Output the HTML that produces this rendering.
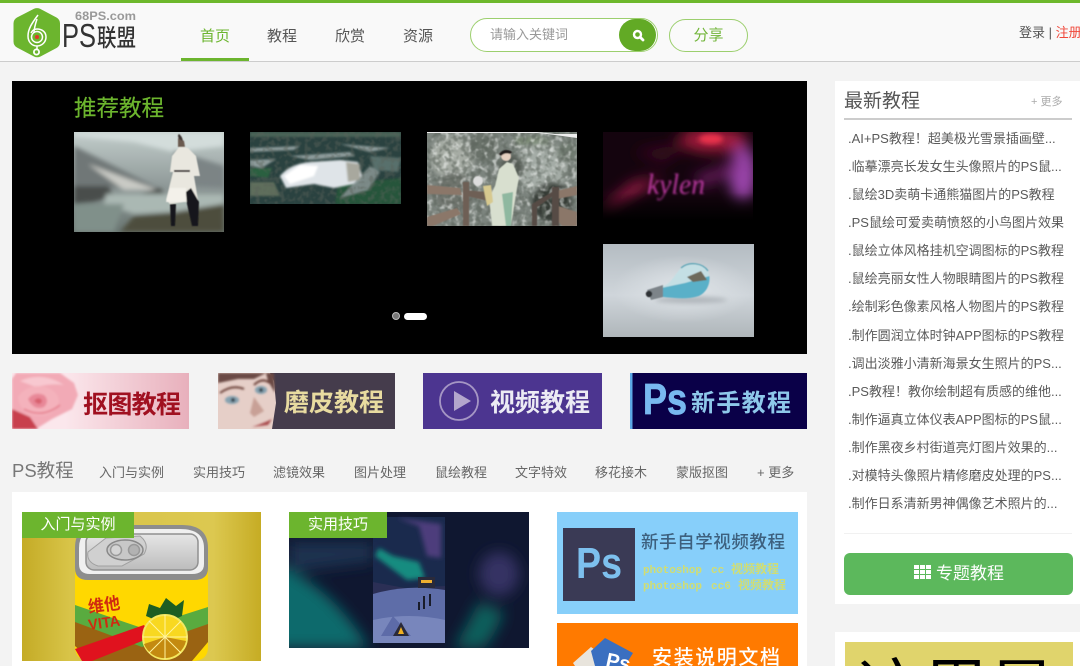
<!DOCTYPE html>
<html lang="zh"><head><meta charset="utf-8"><title>PS联盟</title>
<style>
html,body{margin:0;padding:0;width:1080px;height:666px;overflow:hidden}
body{background:#f3f3f3;font-family:"Liberation Sans","Noto Sans CJK SC",sans-serif;color:#555}
#w{position:relative;width:1080px;height:666px;overflow:hidden}
.a{position:absolute;white-space:nowrap}
svg{position:absolute;display:block;overflow:hidden}
.nav{top:26px;font-size:15px;line-height:22px;color:#555}
.tab{top:464px;font-size:13px;line-height:18px;color:#666}
.li{left:848px;font-size:13px;line-height:18px;color:#5a5a5a}
</style></head><body><div id="w">
<svg width="0" height="0" style="position:absolute"><defs>
<filter id="b1" x="-30%" y="-30%" width="160%" height="160%"><feGaussianBlur stdDeviation="1"/></filter>
<filter id="b2" x="-50%" y="-50%" width="200%" height="200%"><feGaussianBlur stdDeviation="2.500"/></filter>
<filter id="b3" x="-60%" y="-60%" width="220%" height="220%"><feGaussianBlur stdDeviation="7"/></filter>
<filter id="b4" x="-20%" y="-20%" width="140%" height="140%"><feGaussianBlur stdDeviation=".6"/></filter>
<filter id="nd" x="0" y="0" width="100%" height="100%"><feTurbulence type="fractalNoise" baseFrequency=".2" numOctaves="2" seed="4"/><feColorMatrix values="0 0 0 0 .1  0 0 0 0 .12  0 0 0 0 .1  0 0 0 5 -2.300"/><feGaussianBlur stdDeviation=".5"/></filter>
<filter id="nl" x="0" y="0" width="100%" height="100%"><feTurbulence type="fractalNoise" baseFrequency=".18" numOctaves="2" seed="9"/><feColorMatrix values="0 0 0 0 .88  0 0 0 0 .9  0 0 0 0 .88  0 0 0 5 -2.500"/><feGaussianBlur stdDeviation=".5"/></filter>
</defs></svg>

<!-- header -->
<div class="a" style="left:0;top:0;width:1080px;height:61px;background:#f9f9f9;border-bottom:1px solid #ccc"></div>
<div class="a" style="left:0;top:0;width:1080px;height:3px;background:#6db82c"></div>
<svg style="left:10px;top:5px" width="130" height="55" viewBox="0 0 130 55">
<path d="M24 3.800Q27 2.400 30 3.800L46.500 12.500Q50 14.500 50 18.500L50 37Q50 41 46.500 43L30.500 51.500Q27 53 24 51.500L7 42.500Q3.500 40.500 3.500 36.500L3.500 18.500Q3.500 14.500 7 12.500Z" fill="#6cb52e"/>
<g fill="none" stroke="#fff" stroke-width="1.500">
<path d="M28 10C22 18 18 24 18 31C18 37 22 41 27 41C32 41 36 37 36 32C36 27 32 24 27 24C24 24 22 26 21 28"/>
<path d="M27 14C25 20 24 24 24 28"/>
<circle cx="27" cy="32" r="5.500"/>
<circle cx="26.500" cy="47" r="2.600" stroke-width="1.800"/>
</g>
<path d="M27 41V44" stroke="#fff" stroke-width="1.500"/>
<circle cx="27" cy="32" r="2" fill="#e0392c"/>
<text x="65" y="15" font-family="Liberation Sans" font-size="11.500" font-weight="bold" fill="#999" textLength="61" lengthAdjust="spacingAndGlyphs">68PS.com</text>
<text x="52" y="42" font-family="Liberation Sans" font-size="33" fill="#333" textLength="34" lengthAdjust="spacingAndGlyphs">PS</text>
<text x="87" y="41" font-family="Noto Sans CJK SC" font-size="24" font-weight="500" fill="#333" textLength="39" lengthAdjust="spacingAndGlyphs">联盟</text>
</svg>
<div class="a nav" style="left:200px;color:#6cb52e">首页</div>
<div class="a nav" style="left:267px">教程</div>
<div class="a nav" style="left:335px">欣赏</div>
<div class="a nav" style="left:403px">资源</div>
<div class="a" style="left:181px;top:58px;width:68px;height:3px;background:#6cb52e"></div>
<div class="a" style="left:470px;top:18px;width:186px;height:32px;border:1.500px solid #9ccf6e;border-radius:17px;background:#fff"></div>
<div class="a" style="left:490px;top:26px;font-size:13px;line-height:18px;color:#999">请输入关键词</div>
<div class="a" style="left:619px;top:19px;width:37px;height:32px;border-radius:17px;background:#62aa25"></div>
<svg style="left:630px;top:27px" width="16" height="16" viewBox="0 0 16 16"><circle cx="7.500" cy="7.500" r="3.500" fill="none" stroke="#fff" stroke-width="2.400"/><path d="M10.500 10.500L13 13" stroke="#fff" stroke-width="2.800" stroke-linecap="round"/></svg>
<div class="a" style="left:669px;top:19px;width:77px;height:31px;border:1px solid #9ccf6e;border-radius:17px;background:#fafafa;text-align:center;font-size:15px;line-height:31px;color:#72b53a">分享</div>
<div class="a" style="left:1019px;top:24px;font-size:13px;line-height:18px;color:#555">登录 | <span style="color:#f0483a">注册</span></div>

<!-- slider -->
<div class="a" style="left:12px;top:81px;width:795px;height:273px;background:#000"></div>
<div class="a" style="left:74px;top:93px;font-size:22.500px;line-height:31px;color:#6cb52e;-webkit-text-stroke:.2px #6cb52e">推荐教程</div>

<svg style="left:74px;top:132px" width="150" height="100" viewBox="0 0 150 100">
<defs><linearGradient id="s1" x1="0" y1="0" x2="0" y2="1"><stop offset="0" stop-color="#c2cdcb"/><stop offset=".55" stop-color="#8e9897"/><stop offset="1" stop-color="#6a7672"/></linearGradient></defs>
<rect width="150" height="100" fill="url(#s1)"/>
<g filter="url(#b2)">
<path d="M0 0H150V14L100 20 60 10 0 4Z" fill="#d3dddb"/>
<path d="M0 14L88 58 0 54Z" fill="#6f7777"/>
<path d="M14 32L84 58 50 58Z" fill="#c9cac5"/>
<path d="M100 18L150 34V56L100 54Z" fill="#7c8485"/>
<path d="M0 54H34L40 64 20 70 0 72Z" fill="#4a4e4c"/>
<path d="M66 62L86 56 94 66 70 70Z" fill="#4c4f4c"/>
<path d="M32 62H150V78L60 82 30 72Z" fill="#aab8b3"/>
<path d="M0 72H50L40 100H0Z" fill="#80908a"/>
<path d="M46 100L60 84 100 80 150 72V100Z" fill="#4e4d3c"/>
</g>
<g filter="url(#b4)">
<path d="M106 14L114 16 122 24 126 44 120 44 124 68 96 72 92 68 99 40 96 40 98 24Z" fill="#e9e7df"/>
<path d="M100 38H116V40H100Z" fill="#3a3230"/>
<path d="M104 6L110 9 111 15 104 15Z" fill="#6a5a50"/>
<path d="M105 7Q103 3 105 2Q108 4 109 9Z" fill="#3c3433"/>
<path d="M112 60L117 56 125 70 124 94H118L113 72Z" fill="#17181a"/>
<path d="M96 72H102L101 94H97Z" fill="#17181a"/>
<path d="M96 56H112V70L92 70Z" fill="#f3f1ea"/>
</g></svg>

<svg style="left:250px;top:132px" width="151" height="72" viewBox="0 0 151 72">
<rect width="151" height="72" fill="#2a4240"/>
<g filter="url(#b1)">
<path d="M0 0H151V5H0Z" fill="#4a6356"/>
<path d="M0 16L50 14 44 18 0 20ZM40 24L100 20 105 24 60 28ZM0 28L26 27 12 36 0 34ZM90 12L140 16 120 20Z" fill="#8d9b9b"/>
<path d="M0 36H22L18 46 0 44Z" fill="#2b6040"/>
<path d="M88 52L151 46V72H85Z" fill="#28543a"/>
<path d="M0 50H24L30 64H0Z" fill="#5e6e5c"/>
<path d="M120 24L151 26 148 40 124 38Z" fill="#58706c"/>
<path d="M105 50L120 34 130 40 118 58 90 66Z" fill="#7c8a88"/>
</g>
<rect width="151" height="72" filter="url(#nd)" opacity=".45"/>
<g filter="url(#b1)">
<path d="M30 44Q40 32 60 30L90 28 108 30 112 44 104 52 84 56 64 52 36 56Z" fill="#dfe4e8"/>
<path d="M34 44L50 33 68 34 64 44 40 52Z" fill="#fff"/>
<path d="M96 30L110 32 110 48 98 50Z" fill="#a8a89e"/>
</g></svg>

<svg style="left:427px;top:132px" width="150" height="94" viewBox="0 0 150 94">
<rect width="150" height="94" fill="#7c847e"/>
<g filter="url(#b2)">
<circle cx="25" cy="25" r="22" fill="#a6aca4"/><circle cx="56" cy="14" r="16" fill="#6a726a"/><circle cx="115" cy="35" r="26" fill="#a4aca6"/><circle cx="85" cy="35" r="12" fill="#545b54"/><circle cx="140" cy="20" r="10" fill="#6f7a70"/><circle cx="28" cy="60" r="20" fill="#6f746e"/><circle cx="125" cy="70" r="20" fill="#343a36"/>
<path d="M88 5L112 4 128 12 88 13Z" fill="#7b8a76"/>
</g>
<rect width="150" height="94" filter="url(#nl)" opacity=".55"/>
<rect width="150" height="94" filter="url(#nd)" opacity=".55"/>
<path d="M0 0H110L128 2 150 2V6L128 3 112 1H0Z" fill="#eee"/>
<g filter="url(#b4)">
<path d="M0 53L33 56 35 63 0 62ZM0 85L30 76 34 82 6 94H0ZM125 60L150 54V63L125 68ZM125 72L150 80V94H135L125 82Z" fill="#8b7769"/>
<path d="M36 50H42V94H36ZM60 60L65 70 40 64 36 58Z" fill="#6e5f55"/>
<path d="M105 72L125 60 126 64 106 78ZM105 72H110V94H105ZM125 55H132V94H125Z" fill="#574b45"/>
<path d="M80 30L72 37 68 54 62 66 65 94H84L90 56 92 46 86 32Z" fill="#d8dfcf"/>
<path d="M75 62L79 94H84L86 60Z" fill="#8fb8a0"/>
<path d="M56 54L64 53 66 70 60 74Z" fill="#d7c98f"/>
<circle cx="79" cy="24" r="5" fill="#e6cfc0"/>
<path d="M72 22Q78 15 85 20L83 22Q78 20 74 24Z" fill="#211a1c"/>
<circle cx="51" cy="49" r="5" fill="#ddd"/>
</g></svg>

<svg style="left:603px;top:132px" width="150" height="93" viewBox="0 0 150 93">
<defs><linearGradient id="s4" x1="0" y1="0" x2="0" y2="1"><stop offset=".65" stop-color="#000" stop-opacity="0"/><stop offset=".95" stop-color="#000"/></linearGradient></defs>
<rect width="150" height="93" fill="#14040e"/>
<g filter="url(#b3)">
<ellipse cx="110" cy="8" rx="34" ry="12" fill="#a81c3c"/>
<ellipse cx="140" cy="42" rx="14" ry="28" fill="#9a44aa"/>
<path d="M4 72L30 50 60 45 0 84Z" fill="#a01a4a"/>
<path d="M90 45L140 28 130 40 100 55Z" fill="#6f1c64"/>
<path d="M30 20L90 10 60 30Z" fill="#3c0a22"/>
</g>
<ellipse cx="108" cy="7" rx="12" ry="5" fill="#e8304c" filter="url(#b2)"/>
<text x="44" y="62" font-family="Liberation Serif" font-style="italic" font-size="30" fill="#b8389e" textLength="58" lengthAdjust="spacingAndGlyphs" filter="url(#b1)">kylen</text>
<rect width="150" height="93" fill="url(#s4)"/></svg>

<svg style="left:603px;top:244px" width="151" height="93" viewBox="0 0 151 93">
<defs><linearGradient id="s5" x1="0" y1="0" x2="0" y2="1"><stop offset="0" stop-color="#b4bcc2"/><stop offset=".55" stop-color="#cfd5da"/><stop offset="1" stop-color="#afb6ba"/></linearGradient>
<radialGradient id="s5b" cx=".5" cy=".5" r=".5"><stop offset="0" stop-color="#dfe4e8"/><stop offset="1" stop-color="#dfe4e8" stop-opacity="0"/></radialGradient>
<clipPath id="bulb"><path d="M60 42C68 40 72 30 78 24C86 17 100 19 105 27C109 36 105 48 96 52C84 56 72 54 60 53Z"/></clipPath></defs>
<rect width="151" height="93" fill="url(#s5)"/>
<ellipse cx="80" cy="45" rx="70" ry="34" fill="url(#s5b)"/>
<g filter="url(#b4)">
<ellipse cx="88" cy="56" rx="36" ry="3.500" fill="#b0b6bb" filter="url(#b2)"/>
<path d="M44 46L60 41 60 53 48 56Z" fill="#7d8489"/>
<circle cx="46" cy="50" r="3.200" fill="#2e3236"/>
<path d="M60 42C68 40 72 30 78 24C86 17 100 19 105 27C109 36 105 48 96 52C84 56 72 54 60 53Z" fill="#c4dfe4"/>
<g clip-path="url(#bulb)"><path d="M58 44L82 39 110 31V58H58Z" fill="#5ab0c8"/><path d="M84 33L98 27 104 36 90 38Z" fill="#6e6a5c"/></g>
<path d="M78 24C86 17 100 19 105 27" fill="none" stroke="#5aa4b6" stroke-width="1.300"/>
</g></svg>

<div class="a" style="left:392px;top:312px;width:6px;height:6px;border-radius:50%;background:#777;border:1px solid #bbb"></div>
<div class="a" style="left:404px;top:313px;width:23px;height:7px;border-radius:4px;background:#fff"></div>

<!-- banners -->
<svg style="left:12px;top:373px" width="177" height="56" viewBox="0 0 177 56">
<defs><linearGradient id="b_1" x1="0" x2="1"><stop offset=".3" stop-color="#fbe7ec"/><stop offset="1" stop-color="#e8b0bc"/></linearGradient></defs>
<rect width="177" height="56" fill="url(#b_1)"/>
<g filter="url(#b1)">
<path d="M4 0H48L62 10 66 22 60 36 40 46 24 56H0V6Z" fill="#f2aab6"/>
<path d="M0 36L18 44 26 56H0Z" fill="#c8404e"/>
<path d="M8 8Q30 -2 52 12 40 10 24 14Z" fill="#f8c8d0"/>
<path d="M6 24Q16 10 34 14 50 20 46 34 36 46 20 42 8 38 6 24Z" fill="#f4b2bc"/>
<path d="M16 26Q22 18 32 22 38 28 32 34 22 38 16 26Z" fill="#e88898"/>
<path d="M22 28Q26 23 30 27 30 31 26 31Z" fill="#d8606e"/>
<path d="M12 36Q30 46 48 32" stroke="#e47a8a" stroke-width="1.500" fill="none"/>
</g>
<text x="71" y="40" font-family="Noto Sans CJK SC" font-size="25" font-weight="bold" fill="#a01020" textLength="98">抠图教程</text></svg>

<svg style="left:218px;top:373px" width="177" height="56" viewBox="0 0 177 56">
<rect width="177" height="56" fill="#453c4c"/>
<path d="M0 0H52L56 8 58 30 54 56H0Z" fill="#e6cfc8"/>
<g filter="url(#b1)">
<path d="M0 0H48L36 6 20 6 0 10ZM48 0L56 0 57 20 50 8Z" fill="#6a4a44"/>
<path d="M2 20Q14 11 26 16" stroke="#6a4038" stroke-width="2" fill="none"/>
<path d="M36 12Q44 4 52 10" stroke="#6a4038" stroke-width="2" fill="none"/>
<ellipse cx="14" cy="27" rx="7" ry="4" fill="#86a2b0"/><circle cx="15" cy="27" r="2" fill="#2e3a44"/>
<ellipse cx="43" cy="17" rx="6" ry="4" fill="#86a2b0"/><circle cx="43" cy="17" r="2" fill="#2e3a44"/>
<path d="M36 24L46 38 36 44 32 40Z" fill="#c8a096"/>
<path d="M34 54Q46 50 54 46L50 52Z" fill="#a84a4c"/>
</g>
<text x="66" y="38" font-family="Noto Sans CJK SC" font-size="25" font-weight="bold" fill="#e8dba0" textLength="100">磨皮教程</text></svg>

<svg style="left:423px;top:373px" width="179" height="56" viewBox="0 0 179 56">
<rect width="179" height="56" fill="#4c3590"/>
<circle cx="36" cy="28" r="19" fill="none" stroke="#a596c4" stroke-width="1.800"/>
<path d="M31 18L48 28 31 38Z" fill="#b3a6cc"/>
<text x="67" y="38" font-family="Noto Sans CJK SC" font-size="25" font-weight="bold" fill="#ecebf4" textLength="100">视频教程</text></svg>

<svg style="left:630px;top:373px" width="177" height="56" viewBox="0 0 177 56">
<rect width="177" height="56" fill="#0a0048"/>
<rect width="2.500" height="56" fill="#5ca8e6"/>
<text x="13" y="41" font-family="Liberation Sans" font-size="44" font-weight="bold" fill="#78b8f0" stroke="#78b8f0" stroke-width=".8" textLength="44" lengthAdjust="spacingAndGlyphs">Ps</text>
<text x="61" y="38" font-family="Noto Sans CJK SC" font-size="24" font-weight="bold" fill="#8ec8ea" textLength="100">新手教程</text></svg>

<!-- tabs -->
<div class="a" style="left:12px;top:458px;font-size:18.500px;line-height:26px;color:#777">PS教程</div>
<div class="a tab" style="left:99px">入门与实例</div>
<div class="a tab" style="left:193px">实用技巧</div>
<div class="a tab" style="left:273px">滤镜效果</div>
<div class="a tab" style="left:354px">图片处理</div>
<div class="a tab" style="left:435px">鼠绘教程</div>
<div class="a tab" style="left:515px">文字特效</div>
<div class="a tab" style="left:595px">移花接木</div>
<div class="a tab" style="left:676px">蒙版抠图</div>
<div class="a tab" style="left:757px">+ 更多</div>

<!-- content panel -->
<div class="a" style="left:12px;top:492px;width:795px;height:174px;background:#fff"></div>

<svg style="left:22px;top:512px" width="239" height="149" viewBox="0 0 239 149">
<defs><linearGradient id="c1" x1="0" x2="1"><stop offset="0" stop-color="#c4ab26"/><stop offset=".2" stop-color="#d8c448"/><stop offset=".8" stop-color="#dcc850"/><stop offset="1" stop-color="#c6ac24"/></linearGradient>
<linearGradient id="c1m" x1="0" y1="0" x2="0" y2="1"><stop offset="0" stop-color="#e6e6e6"/><stop offset="1" stop-color="#bcbcbc"/></linearGradient></defs>
<rect width="239" height="149" fill="url(#c1)"/>
<path d="M53 135V40Q53 13 76 13H160Q186 13 186 40V135Q186 149 170 149H70Q53 149 53 135Z" fill="#ffd800"/>
<path d="M53 56V36Q53 13 76 13H160Q186 13 186 36V56Q186 68 172 68H66Q53 68 53 56Z" fill="#8d8d8d"/>
<path d="M57 52V36Q57 17 78 17H158Q182 17 182 36V52Q182 62 170 62H68Q57 62 57 52Z" fill="#f0f0f0"/>
<rect x="64" y="22" width="112" height="36" rx="8" fill="url(#c1m)" stroke="#909090" stroke-width="1.500"/>
<path d="M66 40L84 26 118 24Q128 32 122 42L100 54 76 54Q64 50 66 40Z" fill="#d0d0d0" stroke="#a0a0a0"/>
<ellipse cx="103" cy="38" rx="18" ry="10" fill="#c8c8c8" stroke="#888" stroke-width="1.500"/>
<circle cx="94" cy="38" r="5.500" fill="#d4d4d4" stroke="#999" stroke-width="1.500"/><circle cx="112" cy="38" r="5.500" fill="#b2b2b2" stroke="#999" stroke-width="1.500"/>
<path d="M53 108L120 134 186 108V130L170 149H70L53 134Z" fill="#9a6312"/>
<path d="M53 93L120 116 186 95V112L120 135 53 110Z" fill="#59ab3f"/>
<path d="M53 137L122 113 130 125 70 149H60Z" fill="#e0121e"/>
<text x="67" y="101" font-family="Noto Sans CJK SC" font-size="17" font-weight="bold" fill="#d02a10" transform="rotate(-8 67 101)" textLength="32" lengthAdjust="spacingAndGlyphs">维他</text>
<text x="67" y="118" font-family="Liberation Sans" font-size="15" font-weight="bold" fill="#d02a10" transform="rotate(-8 67 118)" textLength="32" lengthAdjust="spacingAndGlyphs">VITA</text>
<path d="M124 104L127 92 138 96 144 86 154 94 162 88 160 104 143 112Z" fill="#1d5e22"/>
<circle cx="143" cy="125" r="22" fill="#f8d820" stroke="#f4e860" stroke-width="2"/>
<path d="M143 125L122 132A22 22 0 0 0 164 129Z" fill="#c48a10"/>
<path d="M143 103V147M121 125H165M127 109L159 141M159 109L127 141" stroke="#fff4a0" stroke-width="1"/>
</svg>
<div class="a" style="left:22px;top:512px;width:112px;height:26px;background:#6cb52e;color:#fff;font-size:15px;line-height:25px;text-align:center">入门与实例</div>

<svg style="left:289px;top:512px" width="240" height="136" viewBox="0 0 240 136">
<rect width="240" height="136" fill="#0f1730"/>
<g filter="url(#b3)">
<path d="M-20 50Q40 70 80 136H-20Z" fill="#0c6a6c"/>
<path d="M165 136Q180 110 190 90L215 100Q205 125 195 136Z" fill="#0e5f5c"/>
<ellipse cx="210" cy="62" rx="20" ry="22" fill="#363264"/>
<path d="M0 30H84V50L0 60Z" fill="#1c3350"/>
</g>
<rect x="84" y="5" width="72" height="126" fill="#1c2e52" opacity=".85"/>
<g filter="url(#b2)">
<path d="M86 44L118 68 136 66 130 50 104 44 90 36Z" fill="#128c80"/>
<path d="M108 6L152 12 152 46 138 44 130 14Z" fill="#4d3c7c"/>
</g>
<path d="M84 70L116 76 156 74V131H84Z" fill="#2b2f55"/>
<path d="M84 82Q118 72 156 78V131H84Z" fill="#5e6da8"/>
<path d="M84 108Q120 100 156 108V131H84Z" fill="#7886bc"/>
<path d="M92 124L104 104 122 124Z" fill="#5d6ba8"/>
<path d="M104 124L112 110 120 124Z" fill="#2a2a3a"/><path d="M109 122L112 115 115 122Z" fill="#f0b020"/>
<rect x="129" y="65" width="17" height="11" fill="#2a2a3a"/><rect x="132" y="68" width="11" height="3" fill="#f0b030"/>
<path d="M135 84V97M141 82V94M130 90V98" stroke="#191c2a" stroke-width="2"/>
</svg>
<div class="a" style="left:289px;top:512px;width:98px;height:26px;background:#6cb52e;color:#fff;font-size:15px;line-height:25px;text-align:center">实用技巧</div>

<svg style="left:557px;top:512px" width="241" height="102" viewBox="0 0 241 102">
<rect width="241" height="102" fill="#87cffa"/>
<rect x="6" y="16" width="72" height="73" fill="#3a3a55"/>
<text x="19" y="66" font-family="Liberation Sans" font-size="44" font-weight="bold" fill="#7dc0ee" textLength="46" lengthAdjust="spacingAndGlyphs">Ps</text>
<text x="84" y="36" font-family="Noto Sans CJK SC" font-size="17.500" font-weight="500" fill="#3d607e" textLength="144">新手自学视频教程</text>
<g font-size="11" font-weight="bold" fill="#dde05c" opacity=".85" font-family="Liberation Mono,Noto Sans CJK SC">
<text x="86" y="61" textLength="59">photoshop</text><text x="154" y="61">cc</text><text x="174" y="61" font-size="12">视频教程</text>
<text x="86" y="77" textLength="59">photoshop</text><text x="154" y="77">cc6</text><text x="181" y="77" font-size="12">视频教程</text>
</g>
</svg>

<svg style="left:557px;top:623px" width="241" height="43" viewBox="0 0 241 43">
<rect y="0" width="241" height="43" fill="#ff7a00"/>
<path d="M16 40L34 24 48 34 40 43H18Z" fill="#e8e4dc"/>
<path d="M38 43L34 28 48 15 76 30 68 43Z" fill="#3a6fc0"/>
<text x="48" y="43" font-family="Liberation Sans" font-size="20" font-weight="bold" fill="#fff" transform="rotate(12 48 43)">Ps</text>
<text x="95" y="41" font-family="Noto Sans CJK SC" font-size="20" font-weight="500" fill="#fff" textLength="128">安装说明文档</text>
</svg>

<!-- sidebar -->
<div class="a" style="left:835px;top:81px;width:245px;height:523px;background:#fff"></div>
<div class="a" style="left:844px;top:88px;font-size:19px;line-height:28px;color:#555">最新教程</div>
<div class="a" style="left:1031px;top:94px;font-size:11px;line-height:16px;color:#aaa">+ 更多</div>
<div class="a" style="left:844px;top:118px;width:228px;height:2px;background:#ccc"></div>
<div class="a li" style="top:130px">.AI+PS教程！超美极光雪景插画壁...</div>
<div class="a li" style="top:158px">.临摹漂亮长发女生头像照片的PS鼠...</div>
<div class="a li" style="top:186px">.鼠绘3D卖萌卡通熊猫图片的PS教程</div>
<div class="a li" style="top:214px">.PS鼠绘可爱卖萌愤怒的小鸟图片效果</div>
<div class="a li" style="top:242px">.鼠绘立体风格挂机空调图标的PS教程</div>
<div class="a li" style="top:270px">.鼠绘亮丽女性人物眼睛图片的PS教程</div>
<div class="a li" style="top:298px">.绘制彩色像素风格人物图片的PS教程</div>
<div class="a li" style="top:327px">.制作圆润立体时钟APP图标的PS教程</div>
<div class="a li" style="top:355px">.调出淡雅小清新海景女生照片的PS...</div>
<div class="a li" style="top:383px">.PS教程！教你绘制超有质感的维他...</div>
<div class="a li" style="top:411px">.制作逼真立体仪表APP图标的PS鼠...</div>
<div class="a li" style="top:439px">.制作黑夜乡村街道亮灯图片效果的...</div>
<div class="a li" style="top:467px">.对模特头像照片精修磨皮处理的PS...</div>
<div class="a li" style="top:495px">.制作日系清新男神偶像艺术照片的...</div>
<div class="a" style="left:844px;top:533px;width:228px;height:1px;background:#f1f1f1"></div>
<div class="a" style="left:844px;top:553px;width:229px;height:42px;border-radius:6px;background:#5cb85c"></div>
<svg style="left:914px;top:565px" width="17" height="15" viewBox="0 0 17 15"><g fill="#fff"><rect x="0" y="0" width="5" height="4"/><rect x="6" y="0" width="5" height="4"/><rect x="12" y="0" width="5" height="4"/><rect x="0" y="5" width="5" height="4"/><rect x="6" y="5" width="5" height="4"/><rect x="12" y="5" width="5" height="4"/><rect x="0" y="10" width="5" height="4"/><rect x="6" y="10" width="5" height="4"/><rect x="12" y="10" width="5" height="4"/></g></svg>
<div class="a" style="left:936px;top:562px;font-size:17px;line-height:24px;color:#fff">专题教程</div>

<div class="a" style="left:835px;top:632px;width:245px;height:34px;background:#fff"></div>
<div class="a" style="left:845px;top:642px;width:228px;height:24px;background:#e0d46c;overflow:hidden">
<div class="a" style="left:12px;top:8px;height:16px;overflow:hidden;font-size:66px;line-height:80px;color:#000">这里是</div>
</div>
</div></body></html>
